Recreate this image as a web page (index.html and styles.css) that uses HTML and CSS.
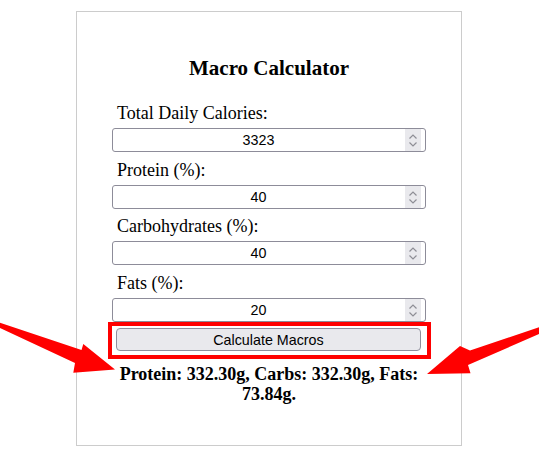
FILE: index.html
```html
<!DOCTYPE html>
<html lang="en">
<head>
<meta charset="utf-8">
<title>Macro Calculator</title>
<link rel="stylesheet" href="styles.css">
</head>
<body>
<div class="card">
  <h2 class="title">Macro Calculator</h2>
  <form class="form">
    <label class="label" for="cal">Total Daily Calories:</label>
    <div class="field-wrap">
      <input class="field" id="cal" type="number" value="3323">
      <span class="spin"><svg width="16" height="22" viewBox="0 0 16 22"><path d="M4.5 9.5 L8 6 L11.5 9.5 M4.5 13.5 L8 17 L11.5 13.5" fill="none" stroke="#8e8e96" stroke-width="1.2"/></svg></span>
    </div>
    <label class="label" for="pro">Protein (%):</label>
    <div class="field-wrap">
      <input class="field" id="pro" type="number" value="40">
      <span class="spin"><svg width="16" height="22" viewBox="0 0 16 22"><path d="M4.5 9.5 L8 6 L11.5 9.5 M4.5 13.5 L8 17 L11.5 13.5" fill="none" stroke="#8e8e96" stroke-width="1.2"/></svg></span>
    </div>
    <label class="label" for="carb">Carbohydrates (%):</label>
    <div class="field-wrap">
      <input class="field" id="carb" type="number" value="40">
      <span class="spin"><svg width="16" height="22" viewBox="0 0 16 22"><path d="M4.5 9.5 L8 6 L11.5 9.5 M4.5 13.5 L8 17 L11.5 13.5" fill="none" stroke="#8e8e96" stroke-width="1.2"/></svg></span>
    </div>
    <label class="label" for="fat">Fats (%):</label>
    <div class="field-wrap field-last">
      <input class="field" id="fat" type="number" value="20">
      <span class="spin"><svg width="16" height="22" viewBox="0 0 16 22"><path d="M4.5 9.5 L8 6 L11.5 9.5 M4.5 13.5 L8 17 L11.5 13.5" fill="none" stroke="#8e8e96" stroke-width="1.2"/></svg></span>
    </div>
    <div class="highlight">
      <button class="btn" type="button">Calculate Macros</button>
    </div>
  </form>
  <p class="result">Protein: 332.30g, Carbs: 332.30g, Fats: 73.84g.</p>
</div>
<svg class="arrows" width="539" height="458" viewBox="0 0 539 458">
  <polygon fill="#ff0000" points="-1,322.5 81.5,350 83.3,344 115,369.5 73.3,372.7 75,363 -1,327.5"/>
  <polygon fill="#ff0000" points="540,327 470,350.5 460,346 427,374 470.5,373.3 468,365 540,333.5"/>
</svg>
</body>
</html>
```
FILE: styles.css
```css
html, body {
  margin: 0;
  padding: 0;
  background: #ffffff;
}

body {
  position: relative;
  width: 539px;
  height: 458px;
  overflow: hidden;
  font-family: "Liberation Serif", "Times New Roman", serif;
  color: #000;
}

.card {
  box-sizing: border-box;
  width: 386px;
  height: 435px;
  margin: 11px 0 0 76px;
  border: 1px solid #cccccc;
  padding: 45px 35px 0 35px;
}

.title {
  margin: 0 0 24px;
  font-size: 21px;
  line-height: 23px;
  font-weight: bold;
  text-align: center;
}

.form {
  display: flex;
  flex-direction: column;
  margin: 0;
}

.label {
  display: block;
  padding-left: 5px;
  font-size: 18px;
  line-height: 18px;
  margin-bottom: 6px;
}

.field-wrap {
  position: relative;
  width: 314px;
  height: 24px;
  margin: 0 0 8.7px;
}

.field-last {
  margin-bottom: 0;
}

.field {
  box-sizing: border-box;
  display: block;
  width: 314px;
  height: 24px;
  margin: 0;
  padding: 1px 23px 1px 2px;
  border: 1px solid #8d8c99;
  border-radius: 3px;
  background: #fff;
  font-family: "Liberation Sans", Arial, sans-serif;
  font-size: 14.3px;
  color: #000;
  text-align: center;
  -moz-appearance: textfield;
  appearance: textfield;
}

.field::-webkit-inner-spin-button,
.field::-webkit-outer-spin-button {
  -webkit-appearance: none;
  margin: 0;
}

.spin {
  position: absolute;
  top: 1px;
  right: 5px;
  width: 16px;
  height: 22px;
  background: #e9e9ed;
  pointer-events: none;
}

.spin svg {
  display: block;
}

.highlight {
  box-sizing: border-box;
  width: 323px;
  margin-left: -4px;
  border: 4px solid #ff0000;
  padding: 2px 6px 4px 4px;
}

.btn {
  box-sizing: border-box;
  display: block;
  width: 305px;
  height: 23px;
  margin: 0;
  padding: 0;
  border: 1px solid #8f8f9d;
  border-radius: 4px;
  background: #e9e9ed;
  font-family: "Liberation Sans", Arial, sans-serif;
  font-size: 14.3px;
  color: #000;
  text-align: center;
}

.result {
  margin: 6px 0 0;
  font-size: 18px;
  line-height: 19.5px;
  font-weight: bold;
  text-align: center;
}

.arrows {
  position: absolute;
  left: 0;
  top: 0;
  pointer-events: none;
}
```
